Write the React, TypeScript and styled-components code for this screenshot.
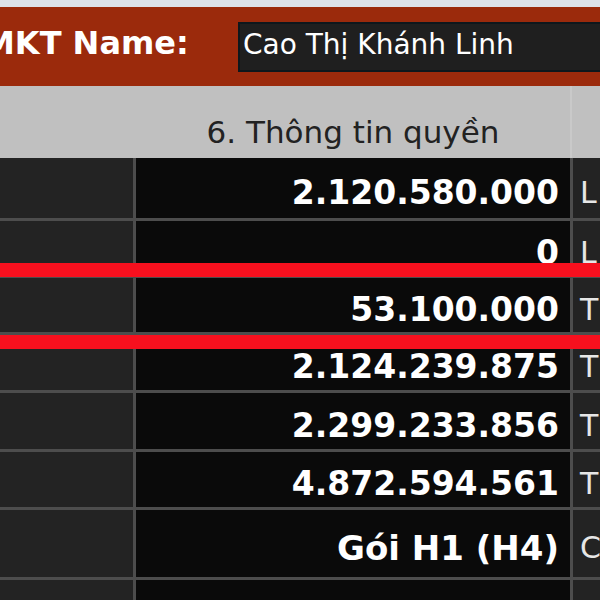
import React from "react";
import styled, { createGlobalStyle } from "styled-components";

const GlobalStyle = createGlobalStyle`
  html, body {
    margin: 0;
    padding: 0;
    background: #c0c0c0;
    overflow: hidden;
  }
`;

const Page = styled.div`
  width: 600px;
  height: 600px;
  overflow: hidden;
  display: flex;
  flex-direction: column;
  font-family: "DejaVu Sans", "Noto Sans", sans-serif;
  background: #c0c0c0;
`;

const TopStrip = styled.div`
  height: 7px;
  background: #dde2ea;
  flex-shrink: 0;
`;

const NameBar = styled.div`
  height: 79px;
  flex-shrink: 0;
  background: #9b2a0c;
  display: flex;
  align-items: center;
`;

const NameLabel = styled.div`
  width: 255px;
  margin-left: -17px;
  margin-bottom: 7px;
  flex-shrink: 0;
  color: #fff;
  font-weight: bold;
  font-size: 32px;
  line-height: 32px;
  white-space: nowrap;
`;

const NameField = styled.div`
  flex: 1;
  height: 50px;
  margin-right: -20px;
  background: #1f1f1f;
  border: 2px solid #0e171c;
  color: #fff;
  font-size: 28px;
  display: flex;
  align-items: center;
  padding: 0 0 4px 3px;
  box-sizing: border-box;
  white-space: nowrap;
`;

const Header = styled.div`
  height: 72px;
  flex-shrink: 0;
  display: grid;
  grid-template-columns: 136px 434px 1fr;
  background: #c0c0c0;
`;

const HeaderCell = styled.div<{ $divider?: boolean }>`
  display: flex;
  align-items: flex-end;
  justify-content: center;
  padding-bottom: 11px;
  color: #222;
  font-size: 31px;
  line-height: 30px;
  white-space: nowrap;
  border-left: ${(p) => (p.$divider ? "2px solid #c9c9c9" : "none")};
`;

const Table = styled.div`
  position: relative;
  flex: 1;
  display: flex;
  flex-direction: column;
  background: #4d4d4d;
`;

const Row = styled.div<{ $h: number }>`
  height: ${(p) => p.$h}px;
  flex-shrink: 0;
  margin-bottom: 3px;
  display: grid;
  grid-template-columns: 133px 434px 1fr;
  column-gap: 3px;
`;

const LabelCell = styled.div`
  background: #232323;
`;

const ValueCell = styled.div<{ $big?: boolean }>`
  background: #0a0a0a;
  color: #fff;
  font-weight: bold;
  font-size: ${(p) => (p.$big ? 34 : 33)}px;
  display: flex;
  align-items: center;
  justify-content: flex-end;
  padding: 8px 11px 0 0;
  white-space: nowrap;
`;

const TypeCell = styled.div`
  background: #232323;
  color: #e6e6e6;
  font-size: 30px;
  display: flex;
  align-items: center;
  padding: 8px 0 0 7px;
  white-space: nowrap;
  overflow: hidden;
`;

const Marker = styled.div<{ $top: number }>`
  position: absolute;
  left: 0;
  right: 0;
  top: ${(p) => p.$top}px;
  height: 14px;
  background: #f7101e;
`;

const rows = [
  { h: 60, value: "2.120.580.000", type: "L" },
  { h: 54, value: "0", type: "L" },
  { h: 54, value: "53.100.000", type: "T" },
  { h: 55, value: "2.124.239.875", type: "T" },
  { h: 56, value: "2.299.233.856", type: "T" },
  { h: 55, value: "4.872.594.561", type: "T" },
  { h: 67, value: "Gói H1 (H4)", type: "C", big: true },
  { h: 60, value: "", type: "" },
];

export default function App() {
  return (
    <Page>
      <GlobalStyle />
      <TopStrip />
      <NameBar>
        <NameLabel>MKT Name:</NameLabel>
        <NameField>Cao Thị Khánh Linh</NameField>
      </NameBar>
      <Header>
        <HeaderCell />
        <HeaderCell>6. Thông tin quyền</HeaderCell>
        <HeaderCell $divider />
      </Header>
      <Table>
        {rows.map((r, i) => (
          <Row key={i} $h={r.h}>
            <LabelCell />
            <ValueCell $big={r.big}>{r.value}</ValueCell>
            <TypeCell>{r.type}</TypeCell>
          </Row>
        ))}
        {/* red highlight marks drawn over the table */}
        <Marker $top={105} />
        <Marker $top={177} />
      </Table>
    </Page>
  );
}
